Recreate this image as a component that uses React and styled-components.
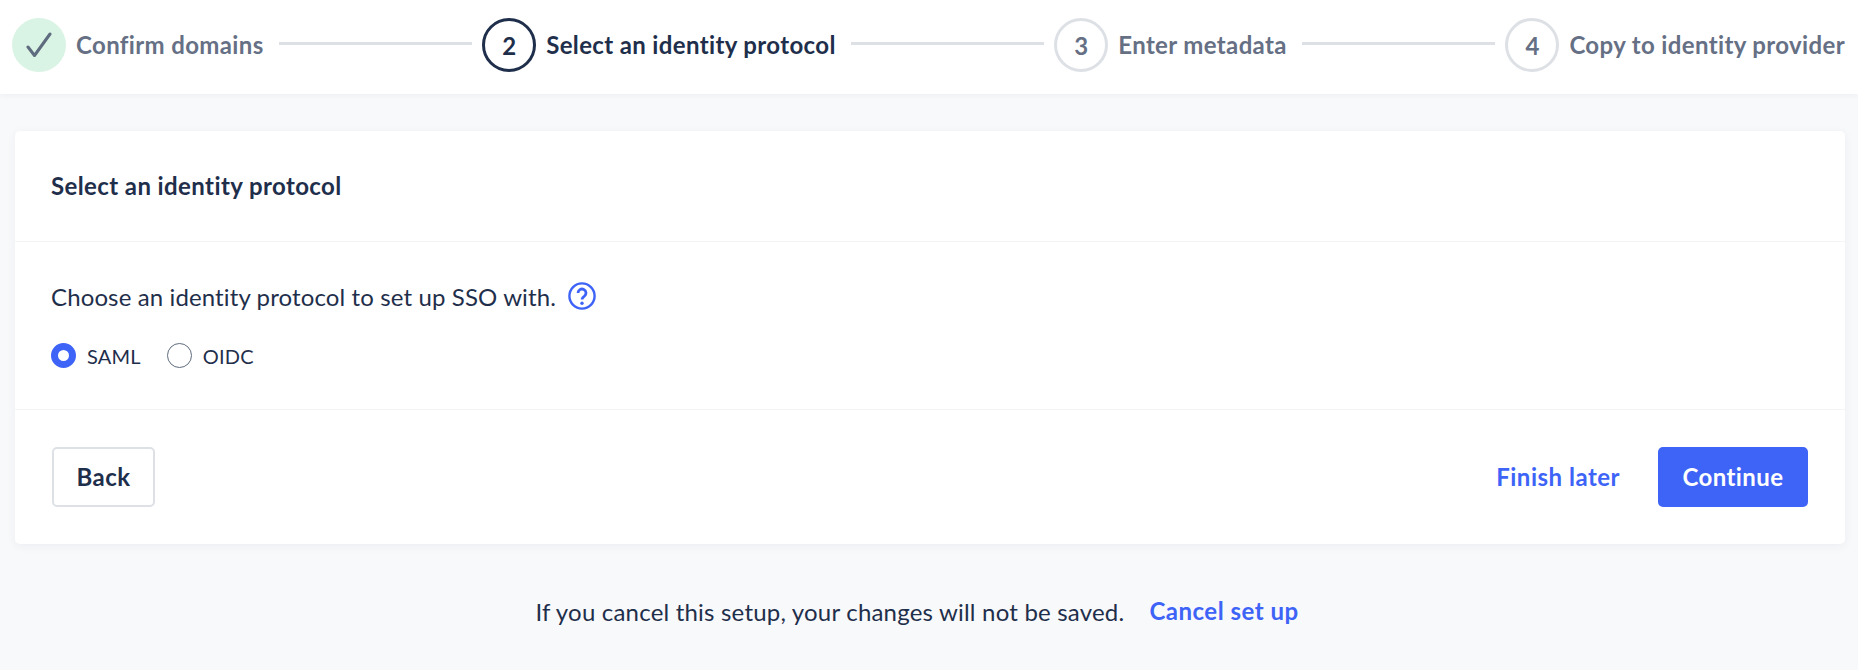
import React from "react";
import styled, { createGlobalStyle } from "styled-components";

const Global = createGlobalStyle`
  html, body { margin: 0; padding: 0; background: #f8f9fb; }
  body { font-family: Lato, "Open Sans", "Liberation Sans", sans-serif; color: #1f2f4b; }
`;

const Page = styled.div`
  width: 1858px;
  height: 670px;
  overflow: hidden;
  display: flex;
  flex-direction: column;
`;

const Stepper = styled.header`
  height: 94px;
  box-sizing: border-box;
  padding: 18px 13px 0 12px;
  background: #fff;
  display: flex;
  align-items: flex-start;
  box-shadow: 0 1px 6px rgba(29, 44, 71, 0.06);
`;

const Step = styled.div`
  display: flex;
  align-items: center;
  height: 54px;
  gap: 10px;
  flex: none;
`;

const Circle = styled.div`
  width: 54px;
  height: 54px;
  box-sizing: border-box;
  border-radius: 50%;
  display: flex;
  align-items: center;
  justify-content: center;
  font-size: 24px;
  font-weight: 700;
  color: ${(p) => (p.$state === "active" ? "#1f2f4b" : "#667085")};
  background: ${(p) => (p.$state === "done" ? "#d9f4e4" : "#fff")};
  border: ${(p) =>
    p.$state === "active"
      ? "3px solid #1f2f4b"
      : p.$state === "done"
        ? "none"
        : "3px solid #dde1e6"};
`;

const StepLabel = styled.span`
  font-size: 24px;
  font-weight: 700;
  letter-spacing: 0.36px;
  padding-bottom: 1px;
  white-space: nowrap;
  color: ${(p) => (p.$active ? "#1f2f4b" : "#667085")};
`;

const Line = styled.div`
  flex: 1;
  height: 3px;
  margin: 24px 10px 0 15px;
  background: #dde1e6;
`;

const Card = styled.section`
  margin: 37px 13px 0 15px;
  background: #fff;
  border-radius: 5px;
  box-shadow: 0 2px 10px rgba(29, 44, 71, 0.06);
`;

const CardTitle = styled.h2`
  margin: 0;
  height: 111px;
  box-sizing: border-box;
  padding: 0 36px 2px;
  display: flex;
  align-items: center;
  font-size: 24px;
  font-weight: 700;
  letter-spacing: 0.4px;
  border-bottom: 1px solid #f3f4f6;
`;

const CardBody = styled.div`
  height: 168px;
  box-sizing: border-box;
  padding: 39px 37px 0 36px;
  border-bottom: 1px solid #f3f4f6;
`;

const Prompt = styled.div`
  display: flex;
  align-items: center;
  gap: 12px;
  font-size: 24px;
  letter-spacing: 0.12px;
  height: 30px;
`;

const Radios = styled.div`
  display: flex;
  align-items: center;
  gap: 26px;
  margin-top: 32px;
`;

const RadioLabel = styled.label`
  display: flex;
  align-items: center;
  gap: 11px;
  font-size: 20px;
  letter-spacing: 0.2px;
`;

const RadioDot = styled.span`
  width: 25px;
  height: 25px;
  box-sizing: border-box;
  border-radius: 50%;
  background: #fff;
  border: ${(p) => (p.$checked ? "7px solid #3e63f7" : "1.5px solid #5f6b7e")};
`;

const CardFooter = styled.div`
  height: 134px;
  box-sizing: border-box;
  padding: 0 37px;
  display: flex;
  align-items: center;
  justify-content: space-between;
`;

const FooterRight = styled.div`
  display: flex;
  align-items: center;
  gap: 38px;
`;

const Button = styled.button`
  height: 60px;
  box-sizing: border-box;
  border-radius: 5px;
  padding: 0 0 2px;
  font-family: inherit;
  font-size: 24px;
  font-weight: 700;
  letter-spacing: 0.4px;
  cursor: pointer;
  width: ${(p) => (p.$primary ? "150px" : "103px")};
  color: ${(p) => (p.$primary ? "#fff" : "#1f2f4b")};
  background: ${(p) => (p.$primary ? "#3e63f7" : "#fff")};
  border: ${(p) => (p.$primary ? "none" : "2px solid #dde1e6")};
`;

const TextLink = styled.a`
  color: #3e63f7;
  font-size: 24px;
  font-weight: 700;
  letter-spacing: 0.5px;
  padding-bottom: 2px;
  white-space: nowrap;
`;

const CancelRow = styled.div`
  margin-top: 52px;
  padding-right: 24px;
  display: flex;
  justify-content: center;
  align-items: center;
  gap: 25px;
  font-size: 24px;
  letter-spacing: 0.2px;
`;

function Check() {
  return (
    <svg width="26" height="26" viewBox="0 0 26 26" fill="none" stroke="#5f6b7e" strokeWidth="3" strokeLinecap="round" strokeLinejoin="round">
      <path d="M2 15l6.5 8.5L24 2" />
    </svg>
  );
}

function Help() {
  return (
    <svg width="28" height="28" viewBox="0 0 28 28" fill="none" stroke="#3e63f7" strokeWidth="2.4">
      <circle cx="14" cy="14" r="12.6" />
      <path d="M10 11a4 4 0 1 1 6.4 3.2c-1.5 1-2.4 1.7-2.4 3.3" strokeWidth="2.8" />
      <circle cx="14" cy="21.2" r="1.7" fill="#3e63f7" stroke="none" />
    </svg>
  );
}

export default function App() {
  return (
    <Page>
      <Global />
      <Stepper>
        <Step>
          <Circle $state="done"><Check /></Circle>
          <StepLabel>Confirm domains</StepLabel>
        </Step>
        <Line />
        <Step>
          <Circle $state="active">2</Circle>
          <StepLabel $active>Select an identity protocol</StepLabel>
        </Step>
        <Line />
        <Step>
          <Circle>3</Circle>
          <StepLabel>Enter metadata</StepLabel>
        </Step>
        <Line />
        <Step>
          <Circle>4</Circle>
          <StepLabel>Copy to identity provider</StepLabel>
        </Step>
      </Stepper>
      <Card>
        <CardTitle>Select an identity protocol</CardTitle>
        <CardBody>
          <Prompt>
            Choose an identity protocol to set up SSO with.
            <Help />
          </Prompt>
          <Radios>
            <RadioLabel><RadioDot $checked />SAML</RadioLabel>
            <RadioLabel><RadioDot />OIDC</RadioLabel>
          </Radios>
        </CardBody>
        <CardFooter>
          <Button>Back</Button>
          <FooterRight>
            <TextLink>Finish later</TextLink>
            <Button $primary>Continue</Button>
          </FooterRight>
        </CardFooter>
      </Card>
      <CancelRow>
        If you cancel this setup, your changes will not be saved.
        <TextLink>Cancel set up</TextLink>
      </CancelRow>
    </Page>
  );
}
